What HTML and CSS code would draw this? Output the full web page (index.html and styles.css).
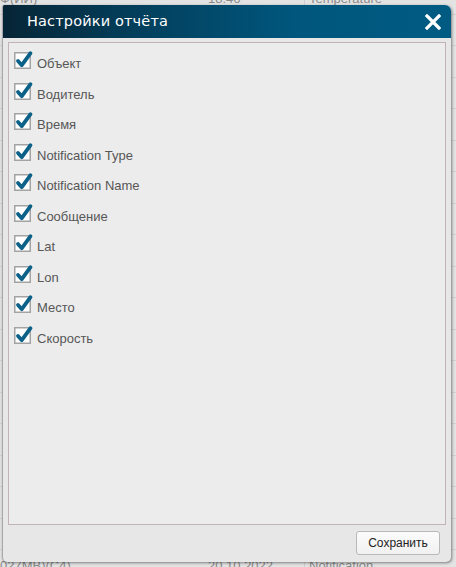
FILE: index.html
```html
<!DOCTYPE html>
<html lang="ru">
<head>
<meta charset="utf-8">
<title>Настройки отчёта</title>
<link rel="stylesheet" href="styles.css">
</head>
<body>
<div class="bg">
  <div class="bg-row"><span class="c1">Ф(ЙИ)</span><span class="c2">18:46</span><span class="c3">Temperature</span></div>
  <div class="bg-row"></div><div class="bg-row"></div><div class="bg-row"></div><div class="bg-row"></div>
  <div class="bg-row"></div><div class="bg-row"></div><div class="bg-row"></div><div class="bg-row"></div>
  <div class="bg-row"></div><div class="bg-row"></div><div class="bg-row"></div><div class="bg-row"></div>
  <div class="bg-row"></div><div class="bg-row"></div><div class="bg-row"></div><div class="bg-row"></div>
  <div class="bg-row"></div>
  <div class="bg-row"><span class="c1">027МВ)(С4)</span><span class="c2">20.10.2022</span><span class="c3">Notification</span></div>
</div>

<div class="dialog">
  <div class="dlg-head">
    <span class="dlg-title">Настройки отчёта</span>
    <svg class="close" width="16" height="16" viewBox="0 0 16 16"><path d="M2 2 L14 14 M14 2 L2 14" stroke="#fff" stroke-width="3.2" stroke-linecap="square"/></svg>
  </div>
  <div class="dlg-body">
    <div class="panel">
      <label class="row"><svg class="cb" width="20" height="20" viewBox="0 0 20 20"><rect x="0.75" y="2.75" width="15.5" height="15.5" fill="#fff" stroke="#a3a3a3" stroke-width="1.5"/><path d="M4 11 L7.8 15.2 L16.5 3.2" fill="none" stroke="#0c6189" stroke-width="3.8" stroke-linecap="round" stroke-linejoin="round"/></svg><span>Объект</span></label>
      <label class="row"><svg class="cb" width="20" height="20" viewBox="0 0 20 20"><rect x="0.75" y="2.75" width="15.5" height="15.5" fill="#fff" stroke="#a3a3a3" stroke-width="1.5"/><path d="M4 11 L7.8 15.2 L16.5 3.2" fill="none" stroke="#0c6189" stroke-width="3.8" stroke-linecap="round" stroke-linejoin="round"/></svg><span>Водитель</span></label>
      <label class="row"><svg class="cb" width="20" height="20" viewBox="0 0 20 20"><rect x="0.75" y="2.75" width="15.5" height="15.5" fill="#fff" stroke="#a3a3a3" stroke-width="1.5"/><path d="M4 11 L7.8 15.2 L16.5 3.2" fill="none" stroke="#0c6189" stroke-width="3.8" stroke-linecap="round" stroke-linejoin="round"/></svg><span>Время</span></label>
      <label class="row"><svg class="cb" width="20" height="20" viewBox="0 0 20 20"><rect x="0.75" y="2.75" width="15.5" height="15.5" fill="#fff" stroke="#a3a3a3" stroke-width="1.5"/><path d="M4 11 L7.8 15.2 L16.5 3.2" fill="none" stroke="#0c6189" stroke-width="3.8" stroke-linecap="round" stroke-linejoin="round"/></svg><span>Notification Type</span></label>
      <label class="row"><svg class="cb" width="20" height="20" viewBox="0 0 20 20"><rect x="0.75" y="2.75" width="15.5" height="15.5" fill="#fff" stroke="#a3a3a3" stroke-width="1.5"/><path d="M4 11 L7.8 15.2 L16.5 3.2" fill="none" stroke="#0c6189" stroke-width="3.8" stroke-linecap="round" stroke-linejoin="round"/></svg><span>Notification Name</span></label>
      <label class="row"><svg class="cb" width="20" height="20" viewBox="0 0 20 20"><rect x="0.75" y="2.75" width="15.5" height="15.5" fill="#fff" stroke="#a3a3a3" stroke-width="1.5"/><path d="M4 11 L7.8 15.2 L16.5 3.2" fill="none" stroke="#0c6189" stroke-width="3.8" stroke-linecap="round" stroke-linejoin="round"/></svg><span>Сообщение</span></label>
      <label class="row"><svg class="cb" width="20" height="20" viewBox="0 0 20 20"><rect x="0.75" y="2.75" width="15.5" height="15.5" fill="#fff" stroke="#a3a3a3" stroke-width="1.5"/><path d="M4 11 L7.8 15.2 L16.5 3.2" fill="none" stroke="#0c6189" stroke-width="3.8" stroke-linecap="round" stroke-linejoin="round"/></svg><span>Lat</span></label>
      <label class="row"><svg class="cb" width="20" height="20" viewBox="0 0 20 20"><rect x="0.75" y="2.75" width="15.5" height="15.5" fill="#fff" stroke="#a3a3a3" stroke-width="1.5"/><path d="M4 11 L7.8 15.2 L16.5 3.2" fill="none" stroke="#0c6189" stroke-width="3.8" stroke-linecap="round" stroke-linejoin="round"/></svg><span>Lon</span></label>
      <label class="row"><svg class="cb" width="20" height="20" viewBox="0 0 20 20"><rect x="0.75" y="2.75" width="15.5" height="15.5" fill="#fff" stroke="#a3a3a3" stroke-width="1.5"/><path d="M4 11 L7.8 15.2 L16.5 3.2" fill="none" stroke="#0c6189" stroke-width="3.8" stroke-linecap="round" stroke-linejoin="round"/></svg><span>Место</span></label>
      <label class="row"><svg class="cb" width="20" height="20" viewBox="0 0 20 20"><rect x="0.75" y="2.75" width="15.5" height="15.5" fill="#fff" stroke="#a3a3a3" stroke-width="1.5"/><path d="M4 11 L7.8 15.2 L16.5 3.2" fill="none" stroke="#0c6189" stroke-width="3.8" stroke-linecap="round" stroke-linejoin="round"/></svg><span>Скорость</span></label>
    </div>
    <div class="footer">
      <button class="btn">Сохранить</button>
    </div>
  </div>
</div>
</body>
</html>
```

FILE: styles.css
```css
html, body {
  margin: 0;
  padding: 0;
  background: #e3e3e3;
  overflow: hidden;
  height: 567px;
}

.bg {
  margin-top: -17px;
  font-family: "Liberation Sans", Arial, sans-serif;
  font-size: 13px;
  color: #8a8a8a;
}
.bg-row {
  height: 31.5px;
  box-sizing: border-box;
  border-bottom: 1px solid #d2d2d2;
  display: flex;
  align-items: center;
}
.bg-row span { display: block; }
.c1 { width: 208px; }
.c2 { width: 96px; }
.c3 { border-left: 1px solid #d0d0d0; padding-left: 4px; }

.dialog {
  position: absolute;
  left: 2px;
  top: 5px;
  width: 449px;
  height: 557px;
  background: #e7e7e7;
  border-left: 1px solid #a8a8a8;
  box-sizing: border-box;
  border-radius: 2px 6px 5px 5px;
  box-shadow: 1px 1px 3px rgba(0, 0, 0, 0.45);
  display: flex;
  flex-direction: column;
  overflow: hidden;
}

.dlg-head {
  height: 33px;
  flex: none;
  background: linear-gradient(to right, #062536 0%, #033f5c 30%, #00567d 65%, #005b82 100%);
  display: flex;
  align-items: center;
  justify-content: space-between;
  padding: 0 10px 0 24px;
}
.dlg-title {
  color: #fff;
  font-family: "DejaVu Sans", Verdana, sans-serif;
  font-size: 14.5px;
  letter-spacing: 0.15px;
  margin-top: -1px;
}
.close { display: block; margin-top: 1px; }

.dlg-body {
  flex: 1;
  display: flex;
  flex-direction: column;
  padding: 4px 5px 0 5px;
}

.panel {
  height: 483px;
  box-sizing: border-box;
  border: 1px solid #c2b3b6;
  background: #ececec;
  padding: 0 0 0 4px;
}

.row {
  display: flex;
  align-items: flex-start;
  height: 30.5px;
  font-family: "Liberation Sans", Arial, sans-serif;
  font-size: 13px;
  line-height: 16px;
  color: #575757;
}
.cb { display: block; flex: none; margin: 7px 3px 0 1px; }
.row span { margin-top: 13px; }

.footer {
  flex: 1;
  display: flex;
  justify-content: flex-end;
  align-items: flex-start;
  padding: 6px 6px 0 0;
}
.btn {
  width: 84px;
  height: 24px;
  border: 1px solid #b9b9b9;
  border-radius: 3px;
  background: linear-gradient(#fbfbfb, #f1f1f1);
  font-family: "Liberation Sans", Arial, sans-serif;
  font-size: 12px;
  color: #222;
  padding: 0;
}
```
